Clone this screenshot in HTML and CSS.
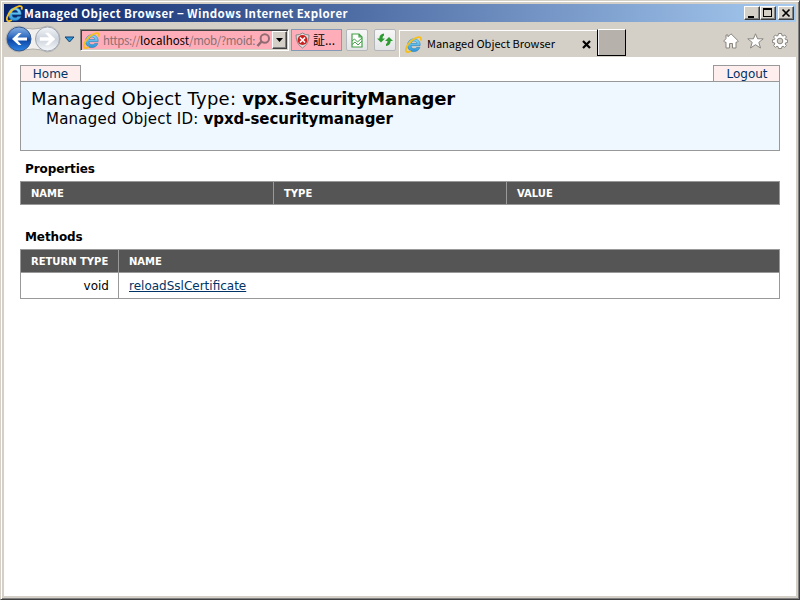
FILE: index.html
```html
<!DOCTYPE html>
<html lang="en">
<head>
<meta charset="utf-8">
<title>Managed Object Browser</title>
<link rel="stylesheet" href="styles.css">
</head>
<body>
<svg class="defs" width="0" height="0" aria-hidden="true">
  <defs>
    <linearGradient id="ieBlue" x1="0" y1="0" x2="0" y2="1"><stop offset="0" stop-color="#8adcfb"/><stop offset="1" stop-color="#2a94d8"/></linearGradient>
    <linearGradient id="backBlue" x1="0" y1="0" x2="0" y2="1"><stop offset="0" stop-color="#8bb1e2"/><stop offset=".35" stop-color="#3f78c8"/><stop offset=".55" stop-color="#0d48a8"/><stop offset="1" stop-color="#2e86e6"/></linearGradient>
    <linearGradient id="fwdGray" x1="0" y1="0" x2="0" y2="1"><stop offset="0" stop-color="#f4f6f9"/><stop offset=".5" stop-color="#ccd3dc"/><stop offset="1" stop-color="#f6f8fb"/></linearGradient>
    <symbol id="ie" viewBox="0 0 16 16">
      <path d="M14.2 9.1H5.6c.1 1.800 1.300 2.900 2.900 2.900 1.100 0 1.900-.4 2.500-1.200h3c-.8 2.400-2.900 3.900-5.600 3.900-3.600 0-6-2.500-6-6s2.500-6 6-6 5.900 2.500 5.900 5.500zM5.700 7h5.500c-.2-1.500-1.200-2.300-2.700-2.300S6 5.600 5.700 7z" fill="url(#ieBlue)" stroke="#1b78b8" stroke-width=".5"/>
      <path d="M14.600 4.300C15.600 1.900 14.600.6 12.300 1.100 8 2 3 6.500 1.300 10.800.3 13.300.7 15.300 2.600 15.200c.9 0 1.900-.5 2.900-1.100" fill="none" stroke="#f6bf1e" stroke-width="1.700"/>
    </symbol>
  </defs>
</svg>
<div class="window">
  <header class="titlebar">
    <svg class="ie-title" width="17" height="17"><use href="#ie"/></svg>
    <span class="title-text">Managed Object Browser − Windows Internet Explorer</span>
    <div class="controls">
      <span class="ctl"><svg width="14" height="12"><path d="M3 9h6v2H3z"/></svg></span>
      <span class="ctl"><svg width="14" height="12" shape-rendering="crispEdges"><path d="M2 1h9v9H2zM3 3v6h7V3z" fill-rule="evenodd"/></svg></span>
      <span class="ctl close"><svg width="14" height="12"><path d="M3.500 2.500l7 7M10.500 2.500l-7 7" stroke="#000" stroke-width="1.700"/></svg></span>
    </div>
  </header>
  <nav class="toolbar">
    <svg class="history" width="72" height="32" viewBox="0 0 72 32">
      <path d="M15 3Q29 9 43 3a13 13 0 0 1 0 26Q29 23 15 29a13 13 0 0 1 0-26z" fill="#f1f0ee" stroke="#b2b0ac"/>
      <circle cx="15" cy="16" r="12" fill="url(#backBlue)" stroke="#34588f"/>
      <circle cx="43.500" cy="16" r="12" fill="url(#fwdGray)" stroke="#9da5b0"/>
      <path d="M8 16l6.500-6h3l-4 4.500H23v3h-9.500l4 4.500h-3z" fill="#fff"/>
      <path d="M51 16l-6.500-6h-3l4 4.500H36v3h9.500l-4 4.500h3z" fill="#fff" stroke="#fff" stroke-width=".5"/>
      <path d="M61 14h9l-4.500 5z" fill="#2d9bd5" stroke="#153f78"/>
    </svg>
    <div class="address">
      <svg width="17" height="17"><use href="#ie"/></svg>
      <span class="url">https://<b>localhost</b>/mob/?moid:</span>
      <svg class="search" width="15" height="16"><circle cx="8.800" cy="6.500" r="4.200" fill="none" stroke="#936b72" stroke-width="2"/><path d="M5.500 9.500L1.500 14" stroke="#936b72" stroke-width="2.600"/></svg>
      <span class="drop"><svg width="7" height="4"><path d="M0 0h7L3.500 4z"/></svg></span>
    </div>
    <div class="cert">
      <svg width="15" height="17" viewBox="0 0 15 17"><path d="M7.500 1Q10 3 14 3q0 9-6.500 13Q1 12 1 3q4 0 6.500-2z" fill="#ddd" stroke="#888"/><circle cx="7.500" cy="8" r="4.900" fill="#c92020"/><path d="M5 5.500l5 5M10 5.500l-5 5" stroke="#fff" stroke-width="1.700"/></svg>
      <span>証...</span>
    </div>
    <div class="tool"><svg width="12" height="15"><path d="M1 1h7l3 3v10H1zM8 1v3h3" fill="#fff" stroke="#42a047" stroke-width="1.200"/><path d="M1 8l2.500-2 3 3L11 5M1 11.500L4 9l3 3 4-4" fill="none" stroke="#42a047"/></svg></div>
    <div class="tool second"><svg width="16" height="14"><path d="M0 5.500h2.300Q2.500 1 7 .5v2Q5.500 3 5.500 5.500H8L4 9.500zM8 8l4-4 4 4h-2.300Q13.500 12.500 9 13v-2q1.500-.5 1.500-3z" fill="#2e9b32"/></svg></div>
    <div class="tab"><svg width="17" height="17"><use href="#ie"/></svg><span>Managed Object Browser</span><svg class="tab-close" width="9" height="9"><path d="M1 1l7 7M8 1L1 8" stroke="#000" stroke-width="2.200"/></svg></div>
    <div class="newtab"></div>
    <div class="actions">
      <svg width="16" height="16"><path d="M8 .8l7.300 7.200-1 1.200H13V15H9.500v-4.500h-3V15H3V9.200H1.700L.7 8 3 5.700V2h2v1.800z" fill="#fff" stroke="#89857f"/></svg>
      <svg width="17" height="16"><path d="M8.500.8l2.100 5h5.600l-4.400 3.600 1.700 5.600-5-3.300-5 3.300 1.700-5.600L.8 5.800h5.600z" fill="#fff" stroke="#89857f"/></svg>
      <svg width="16" height="16" viewBox="-8 -8 16 16"><path d="M-1.500-7.500h3l.4 2 1.200.5L4.800-6 6.500-4 5.200-2.500l.4 1.100 2 .3v2.600l-2 .3-.4 1.200L6.400 4.500 4.500 6.400 3.100 5.200l-1.200.5-.4 1.800h-3l-.4-1.800-1.200-.5-1.400 1.200-1.900-1.900L-5.200 3l-.4-1.200-2-.3v-2.600l2-.3.400-1.100L-6.500-4l1.800-2 1.600 1 1.200-.5zM0-2.800a2.800 2.800 0 1 0 0 5.600 2.800 2.800 0 0 0 0-5.600z" fill="#fff" fill-rule="evenodd" stroke="#89857f"/></svg>
    </div>
  </nav>
  <main class="page">
    <div class="links"><a class="home">Home</a><a class="logout">Logout</a></div>
    <section class="banner">
      <h1><span class="t1">Managed Object Type: </span><b>vpx.SecurityManager</b></h1>
      <h2><span class="t2">Managed Object ID: </span><b>vpxd-securitymanager</b></h2>
    </section>
    <h3>Properties</h3>
    <table class="props">
      <tr><th class="p1">NAME</th><th class="p2">TYPE</th><th>VALUE</th></tr>
    </table>
    <h3 class="mhead">Methods</h3>
    <table>
      <tr><th class="m1">RETURN TYPE</th><th>NAME</th></tr>
      <tr><td class="ret">void</td><td><a class="method">reloadSslCertificate</a></td></tr>
    </table>
  </main>
</div>
</body>
</html>
```
FILE: styles.css
```css
* { box-sizing: border-box; }
body { margin: 0; width: 800px; height: 600px; overflow: hidden; background: #d4d0c8; font-family: "DejaVu Sans", sans-serif; }
svg { display: block; flex: none; }
.defs { position: absolute; }
.window { width: 800px; height: 600px; border: 1px solid #d4d0c8; border-right-color: #404040; border-bottom-color: #404040; box-shadow: inset 1px 1px #fff, inset -1px -1px #808080; padding: 3px; display: flex; flex-direction: column; }
.titlebar { height: 18px; flex: none; display: flex; align-items: center; background: linear-gradient(90deg, #0a246a, #a6caf0); color: #fff; padding-left: 2px; }
.title-text { font: bold 11.5px/18px "Noto Sans CJK JP", sans-serif; letter-spacing: .4px; white-space: pre; margin-left: 1px; }
.controls { display: flex; margin-left: auto; margin-right: 2px; }
.ctl { width: 16px; height: 14px; background: #d4d0c8; border: 1px solid; border-color: #fff #404040 #404040 #fff; box-shadow: inset -1px -1px #808080; }
.ctl.close { margin-left: 2px; }
.toolbar { height: 35px; flex: none; display: flex; align-items: flex-start; }
.history { margin-top: 1px; }
.address { width: 209px; height: 22px; margin: 7px 0 0 4px; background: #ffaeb9; border: 1px solid; border-color: #808080 #fff #fff #808080; box-shadow: inset 1px 1px #404040, inset -1px -1px #d4d0c8; padding: 2px 1px 2px 2px; display: flex; align-items: center; }
.url { font: 11.5px/17px "Noto Sans CJK JP", sans-serif; letter-spacing: -.4px; color: #8a6f73; margin-left: 3px; width: 150px; white-space: nowrap; }
.url b { font-weight: 400; color: #000; letter-spacing: 0; }
.search { margin-left: 3px; }
.drop { width: 15px; height: 18px; margin-left: 1px; background: #d4d0c8; border: 1px solid; border-color: #fff #404040 #404040 #fff; box-shadow: inset -1px -1px #808080; display: flex; align-items: center; justify-content: center; flex: none; }
.cert { width: 51px; height: 22px; margin: 7px 0 0 2px; background: #ffaeb9; border: 1px solid #8399b5; display: flex; align-items: center; padding-left: 3px; font: 12px/18px "Noto Sans CJK JP", sans-serif; white-space: nowrap; }
.cert span { margin-left: 3px; }
.tool { width: 22px; height: 22px; margin: 7px 0 0 4px; border: 1px solid #b3b7bb; border-radius: 2px; background: linear-gradient(#f7f7f7, #e3e4e6); display: flex; align-items: center; justify-content: center; }
.tool.second { margin-left: 6px; }
.tab { width: 198px; height: 27px; margin: 8px 0 0 3px; border: solid #fff; border-width: 1px 0 0 1px; display: flex; align-items: center; padding-left: 5px; font: 11px/16px "Noto Sans CJK JP", sans-serif; }
.tab span { margin-left: 5px; white-space: nowrap; margin-top: -2px; }
.tab-close { margin-left: auto; margin-right: 6px; }
.newtab { width: 29px; height: 27px; margin-top: 7px; background: #b6b2ab; border: 1px solid; border-color: #fff #000 #000 #000; box-shadow: inset 1px 0 #eee; }
.actions { display: flex; gap: 8px; margin: 11px 8px 0 auto; }
.page { flex: 1; background: #fff; padding: 8px 16px 0; }
.links { display: flex; justify-content: space-between; height: 16px; font-size: 12px; line-height: 17px; color: #036; }
.links a { border: 1px solid #999; border-bottom: 0; background: #fee; text-align: center; }
.home { width: 61px; }
.logout { width: 67px; padding-left: 1px; }
.banner { height: 70px; border: 1px solid #999; background: #f0f8ff; padding: 6px 10px; }
h1, h2, h3 { margin: 0; font-weight: 400; white-space: pre; }
h1 { font-size: 18px; line-height: 22px; }
h1 b { letter-spacing: -.17px; }
h2 { font-size: 15px; line-height: 18px; padding-left: 15px; }
h2 b { letter-spacing: -.04px; }
.t1 { letter-spacing: .24px; }
.t2 { letter-spacing: .22px; }
h3 { font-size: 12px; line-height: 16px; font-weight: bold; letter-spacing: -.1px; padding-left: 5px; margin: 10px 0 4px; }
.mhead { margin-top: 24px; }
table { width: 760px; border-collapse: collapse; table-layout: fixed; }
th { height: 23px; background: #555; color: #fff; border: 1px solid #999; font-size: 10px; line-height: 12px; padding: 2px 10px 0; text-align: left; }
.p1 { width: 253px; }
.p2 { width: 233px; }
.m1 { width: 98px; padding-right: 0; white-space: nowrap; }
td { height: 26px; border: 1px solid #999; font-size: 12px; line-height: 16px; padding: 0 10px; }
.ret { text-align: right; padding-right: 9px; }
.method { color: #036; text-decoration: underline; }
```
